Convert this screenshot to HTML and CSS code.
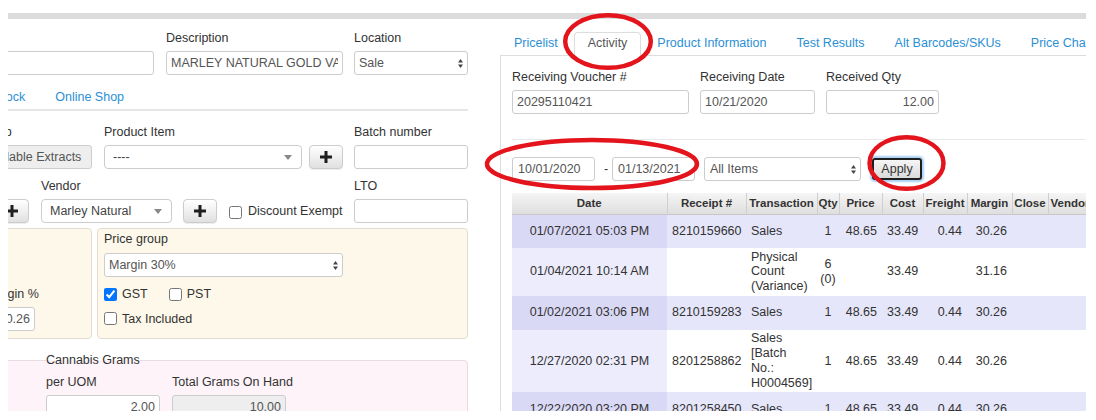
FILE: index.html
```html
<!DOCTYPE html>
<html>
<head>
<meta charset="utf-8">
<title>Product</title>
<link rel="stylesheet" href="styles.css">
</head>
<body>
<div class="frame">
  <div class="topbar"></div>
  <div class="main">
    <div class="left">
      <div class="row r1">
        <div class="field w177"><span class="lbl"></span><input class="inp" value=""></div>
        <div class="field w177 ml12"><span class="lbl">Description</span><input class="inp" value="MARLEY NATURAL GOLD VAPE PEN"></div>
        <div class="field w114 ml11"><span class="lbl">Location</span>
          <div class="sel"><span>Sale</span><svg class="ud" width="5" height="9" viewBox="0 0 5 9"><polygon points="0,3.6 2.5,0 5,3.6"/><polygon points="0,5.4 2.5,9 5,5.4"/></svg></div>
        </div>
      </div>
      <div class="subnav"><a class="sublink">Stock</a><a class="sublink">Online Shop</a></div>
      <div class="row r2">
        <div class="field w115"><span class="lbl">Group</span><input class="inp dis" value="Inhalable Extracts" disabled></div>
        <div class="field w198 ml12"><span class="lbl">Product Item</span>
          <div class="sel s2"><span>----</span><svg class="tri" width="8" height="5" viewBox="0 0 8 5"><polygon points="0,0 8,0 4,5"/></svg></div>
        </div>
        <button class="plus ml7"><svg width="12" height="12" viewBox="0 0 12 12"><rect x="0" y="4.5" width="12" height="3"/><rect x="4.5" y="0" width="3" height="12"/></svg></button>
        <div class="field w114 ml11"><span class="lbl">Batch number</span><input class="inp" value=""></div>
      </div>
      <div class="row r3">
        <button class="plus ml18"><svg width="12" height="12" viewBox="0 0 12 12"><rect x="0" y="4.5" width="12" height="3"/><rect x="4.5" y="0" width="3" height="12"/></svg></button>
        <div class="field w131 ml12"><span class="lbl">Vendor</span>
          <div class="sel s2"><span>Marley Natural</span><svg class="tri" width="8" height="5" viewBox="0 0 8 5"><polygon points="0,0 8,0 4,5"/></svg></div>
        </div>
        <button class="plus ml11"><svg width="12" height="12" viewBox="0 0 12 12"><rect x="0" y="4.5" width="12" height="3"/><rect x="4.5" y="0" width="3" height="12"/></svg></button>
        <label class="exempt ml12"><input type="checkbox" class="cb">Discount Exempt</label>
        <div class="field w114 push"><span class="lbl">LTO</span><input class="inp" value=""></div>
      </div>
      <div class="panels">
        <div class="panel pl">
          <span class="lbl">Margin %</span>
          <input class="inp num mg" value="30.26">
        </div>
        <div class="panel pr">
          <span class="lbl l7">Price group</span>
          <div class="sel pg"><span>Margin 30%</span><svg class="ud" width="5" height="9" viewBox="0 0 5 9"><polygon points="0,3.6 2.5,0 5,3.6"/><polygon points="0,5.4 2.5,9 5,5.4"/></svg></div>
          <div class="chkrow c1">
            <label class="chk"><input type="checkbox" class="cb" checked>GST</label>
            <label class="chk pst"><input type="checkbox" class="cb">PST</label>
          </div>
          <div class="chkrow c2">
            <label class="chk"><input type="checkbox" class="cb">Tax Included</label>
          </div>
        </div>
      </div>
      <fieldset class="gram">
        <legend>Cannabis Grams</legend>
        <div class="row">
          <div class="field w114"><span class="lbl">per UOM</span><input class="inp num" value="2.00"></div>
          <div class="field w114 ml12"><span class="lbl">Total Grams On Hand</span><input class="inp num dis" value="10.00" disabled></div>
        </div>
      </fieldset>
    </div>

    <div class="right">
      <div class="tabs">
        <a class="tab">Pricelist</a>
        <a class="tab active">Activity</a>
        <a class="tab">Product Information</a>
        <a class="tab">Test Results</a>
        <a class="tab">Alt Barcodes/SKUs</a>
        <a class="tab">Price Change</a>
      </div>
      <div class="pane">
        <div class="row">
          <div class="field w177"><span class="lbl">Receiving Voucher #</span><input class="inp" value="20295110421"></div>
          <div class="field w115 ml11"><span class="lbl">Receiving Date</span><input class="inp" value="10/21/2020"></div>
          <div class="field w113 ml11"><span class="lbl">Received Qty</span><input class="inp num" value="12.00"></div>
        </div>
        <div class="hr"></div>
        <div class="filter">
          <input class="inp d" value="10/01/2020">
          <span class="dash">-</span>
          <input class="inp d" value="01/13/2021">
          <div class="sel all"><span>All Items</span><svg class="ud" width="5" height="9" viewBox="0 0 5 9"><polygon points="0,3.6 2.5,0 5,3.6"/><polygon points="0,5.4 2.5,9 5,5.4"/></svg></div>
          <button class="apply">Apply</button>
        </div>
        <table class="grid">
          <colgroup>
            <col class="c-date"><col class="c-rec"><col class="c-tr"><col class="c-qty"><col class="c-price"><col class="c-cost"><col class="c-fr"><col class="c-mg"><col class="c-cl"><col class="c-ven"><col class="c-emp">
          </colgroup>
          <thead>
            <tr><th>Date</th><th>Receipt #</th><th>Transaction</th><th>Qty</th><th>Price</th><th>Cost</th><th>Freight</th><th>Margin</th><th>Close</th><th>Vendor</th><th>Employee</th></tr>
          </thead>
          <tbody>
            <tr class="odd"><td class="dt">01/07/2021 05:03 PM</td><td class="tx">8210159660</td><td class="tx">Sales</td><td class="q">1</td><td class="n">48.65</td><td class="n">33.49</td><td class="n">0.44</td><td class="n">30.26</td><td></td><td></td><td></td></tr>
            <tr class="even"><td class="dt">01/04/2021 10:14 AM</td><td class="tx"></td><td class="tx">Physical Count (Variance)</td><td class="q">6<br>(0)</td><td class="n"></td><td class="n">33.49</td><td class="n"></td><td class="n">31.16</td><td></td><td></td><td></td></tr>
            <tr class="odd"><td class="dt">01/02/2021 03:06 PM</td><td class="tx">8210159283</td><td class="tx">Sales</td><td class="q">1</td><td class="n">48.65</td><td class="n">33.49</td><td class="n">0.44</td><td class="n">30.26</td><td></td><td></td><td></td></tr>
            <tr class="even"><td class="dt">12/27/2020 02:31 PM</td><td class="tx">8201258862</td><td class="tx">Sales [Batch No.: H0004569]</td><td class="q">1</td><td class="n">48.65</td><td class="n">33.49</td><td class="n">0.44</td><td class="n">30.26</td><td></td><td></td><td></td></tr>
            <tr class="odd"><td class="dt">12/22/2020 03:20 PM</td><td class="tx">8201258450</td><td class="tx">Sales</td><td class="q">1</td><td class="n">48.65</td><td class="n">33.49</td><td class="n">0.44</td><td class="n">30.26</td><td></td><td></td><td></td></tr>
          </tbody>
        </table>
      </div>
    </div>
  </div>
</div>
<svg class="marks" width="1096" height="420" viewBox="0 0 1096 420">
  <ellipse cx="608" cy="41.5" rx="42.8" ry="26.3" fill="none" stroke="#e3141c" stroke-width="4.5"/>
  <ellipse cx="592" cy="164" rx="105" ry="24" fill="none" stroke="#e3141c" stroke-width="4.5"/>
  <ellipse cx="906.5" cy="163" rx="37" ry="25.8" fill="none" stroke="#e3141c" stroke-width="4.5"/>
</svg>
</body>
</html>
```
FILE: styles.css
```css
* { box-sizing: border-box; }
html, body { margin: 0; padding: 0; background: #fff; }
body {
  font-family: "Liberation Sans", Arial, Helvetica, sans-serif;
  font-size: 12.5px;
  color: #333;
  position: relative;
  width: 1096px;
  height: 420px;
  overflow: hidden;
}
.frame { margin: 8px 0 0 8px; width: 1078px; height: 403px; overflow: hidden; }
.topbar { height: 6px; margin-top: 5px; background: #dcdcdc; }
.main { display: flex; align-items: flex-start; }
.left { flex: none; width: 491px; margin-left: -31px; padding-top: 12px; }
.right { flex: none; width: 640px; margin-left: 32px; padding-top: 13px; }

.row { display: flex; align-items: flex-end; }
.field { flex: none; display: flex; flex-direction: column; }
.w113 { width: 113px; } .w114 { width: 114px; } .w115 { width: 115px; }
.w131 { width: 131px; } .w177 { width: 177px; } .w198 { width: 198px; }
.ml7 { margin-left: 7px; } .ml11 { margin-left: 11px; } .ml12 { margin-left: 12px; } .ml18 { margin-left: 18px; }
.push { margin-left: auto; }

.lbl { display: block; height: 14px; line-height: 14px; margin-bottom: 6px; white-space: nowrap; color: #333; }
.inp {
  display: block; width: 100%; height: 24px;
  border: 1px solid #ccc; border-radius: 3px;
  padding: 0 4px; margin: 0;
  font: inherit; color: #555; background: #fff; outline: none;
}
.inp.num { text-align: right; }
.inp.dis { background: #eee; -webkit-text-fill-color: #555; opacity: 1; }

.sel {
  height: 24px; border: 1px solid #ccc; border-radius: 3px; background: #fff;
  display: flex; align-items: center; justify-content: space-between;
  padding: 0 4px 0 4px; color: #555; white-space: nowrap; overflow: hidden;
}
.sel .ud { fill: #444; flex: none; }
.sel.s2 { padding: 0 9px 0 8px; border-radius: 4px; color: #444; }
.sel .tri { fill: #888; flex: none; }

.plus {
  flex: none; width: 34px; height: 24px; padding: 0; margin-top: 0;
  border: 1px solid #ccc; border-radius: 4px;
  background: linear-gradient(#ffffff, #e0e0e0);
  box-shadow: 0 1px 1px rgba(0,0,0,.075);
  display: flex; align-items: center; justify-content: center;
}
.plus svg { fill: #1e1e1e; }

.subnav { display: flex; margin-top: 8px; padding-left: 2px; border-bottom: 2px solid #e6e6e6; }
.sublink { display: block; padding: 7px 15px 5px; line-height: 14px; color: #2b8fd6; white-space: nowrap; }

.r2 { margin-top: 14px; }
.r3 { margin-top: 10px; }

.exempt { display: flex; align-items: center; height: 24px; white-space: nowrap; color: #333; }
.cb { width: 13px; height: 13px; margin: 0 6px 0 0; flex: none; }
.exempt .cb { margin-top: 2px; }

.panels { display: flex; margin-top: 5px; }
.panel { flex: none; height: 111px; border: 1px solid #e2ddd0; border-radius: 4px; background: #fdf8e9; }
.pl { width: 115px; padding: 58px 0 0 8px; }
.pl .mg { width: 49px; }
.pr { width: 371px; margin-left: 5px; padding: 3px 6px 0 6px; }
.pr .l7 { margin-bottom: 7px; }
.pg { width: 239px; }
.chkrow { display: flex; align-items: center; height: 14px; }
.c1 { margin-top: 10px; }
.c2 { margin-top: 10.5px; }
.chk { display: flex; align-items: center; white-space: nowrap; color: #333; line-height: 14px; }
.chk .cb { margin-right: 5px; }
.pst { margin-left: 21px; }

.gram {
  margin: 14px 0 0 0; min-width: 0;
  border: 1px solid #e6dce2; border-radius: 4px; background: #fdf3f9;
  padding: 0 0 20px 68px;
}
.gram legend { padding: 0; line-height: 14px; font-size: 12.5px; color: #333; }
.gram .row { margin-top: 8px; }

/* right side */
.tabs { display: flex; border-bottom: 1px solid #ddd; }
.tab {
  display: block; flex: none; padding: 3px 13px 5px; line-height: 14px;
  border: 1px solid transparent; border-radius: 4px 4px 0 0;
  margin-right: 2px; margin-bottom: -1px; color: #2b8fd6; white-space: nowrap;
}
.tab.active { border-color: #ddd #ddd transparent; background: #fff; color: #555; }
.pane { border-left: 1px solid #ddd; padding: 14px 0 40px 11px; }
.hr { height: 1px; background: #e8e8e8; margin-top: 25px; }
.filter { display: flex; align-items: center; margin-top: 17px; height: 24px; }
.inp.d { width: 83px; flex: none; padding-left: 5px; }
.dash { width: 17px; flex: none; padding-left: 5px; text-align: center; color: #333; }
.sel.all { width: 157px; flex: none; margin-left: 9px; padding-left: 5px; }
.apply {
  flex: none; width: 50px; height: 22px; margin-left: 11px; padding: 0;
  font: inherit; color: #333;
  border: 2px solid #1e1e1e; border-radius: 3px;
  background: linear-gradient(#f6f6f6, #dadada);
  box-shadow: 0 0 2px 2px #a8d0f5;
}

.grid { border-collapse: collapse; table-layout: fixed; width: 640px; margin-top: 12px; }
.c-date { width: 155px; } .c-rec { width: 79px; } .c-tr { width: 71px; } .c-qty { width: 22px; }
.c-price { width: 43px; } .c-cost { width: 41px; } .c-fr { width: 44px; } .c-mg { width: 45px; }
.c-cl { width: 36px; } .c-ven { width: 44px; } .c-emp { width: 60px; }
.grid th {
  height: 21px; padding: 0 1px; font-size: 11.5px; font-weight: bold; text-align: center;
  background: linear-gradient(#f5f5f5, #dedede);
  border-right: 1px solid #cfcfcf; border-bottom: 1px solid #c8c8c8;
  white-space: nowrap; overflow: hidden; color: #333;
}
.grid td { padding: 1.5px 5px; line-height: 14.9px; vertical-align: middle; color: #333; }
.grid tbody tr { height: 34px; }
.grid tr.odd { background: #e6e6fa; }
.grid tr.odd td.dt { background: #d9d9f6; }
.grid tr.even { background: #fff; }
.grid tr.even td.dt { background: #ececfc; }
.grid td.dt { text-align: center; white-space: nowrap; }
.grid td.tx { text-align: left; }
.grid td.q { text-align: center; padding: 1.5px 0; }
.grid td.n { text-align: right; }

.marks { position: absolute; left: 0; top: 0; pointer-events: none; }
```
